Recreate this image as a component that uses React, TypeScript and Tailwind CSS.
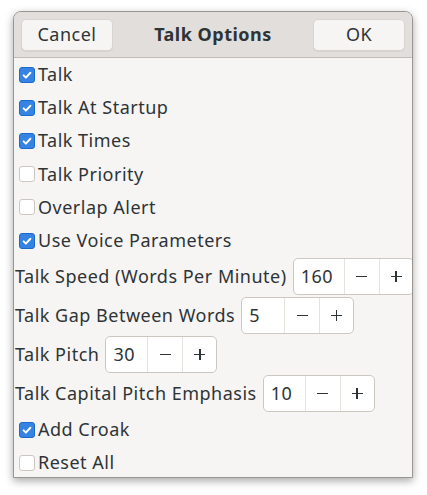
import { useState } from 'react'

const font = { fontFamily: '"Noto Sans", "DejaVu Sans", sans-serif' }

function Check({ checked }: { checked: boolean }) {
  return checked ? (
    <span className="flex h-[16px] w-[16px] shrink-0 items-center justify-center rounded-[3px] border border-[#1b6acb] bg-[#3584e4]">
      <svg viewBox="0 0 16 16" className="h-[12px] w-[12px]" fill="none" stroke="white" strokeWidth={2.6} strokeLinecap="round" strokeLinejoin="round">
        <path d="M3.5 8.5l3 3 6-6.5" />
      </svg>
    </span>
  ) : (
    <span className="h-[16px] w-[16px] shrink-0 rounded-[3px] border border-[#cdc7c2] bg-white" />
  )
}

function CheckRow({ label, initial }: { label: string; initial: boolean }) {
  const [on, setOn] = useState(initial)
  return (
    <div className="flex h-[33.2px] cursor-default items-center gap-[3px] pl-[5px]" onClick={() => setOn(!on)}>
      <Check checked={on} />
      <span className="whitespace-nowrap">{label}</span>
    </div>
  )
}

function SpinRow({ label, value, entry }: { label: string; value: number; entry: string }) {
  const [v, setV] = useState(value)
  return (
    <div className="flex h-[39px] items-center gap-[6px] pl-[1px]">
      <span className="whitespace-nowrap">{label}</span>
      <div className="flex h-[37px] shrink-0 overflow-hidden rounded-[5px] border border-[#cdc7c2] bg-white">
        <div className={`flex items-center pl-[7px] ${entry}`}>{v}</div>
        <button className="flex w-[35px] items-center justify-center border-l border-[#e6e2de]" onClick={() => setV(v - 1)}>
          <span className="block h-[1.5px] w-[11px] bg-[#2e3436]" />
        </button>
        <button className="relative flex w-[34px] items-center justify-center border-l border-[#e6e2de]" onClick={() => setV(v + 1)}>
          <span className="block h-[1.5px] w-[11px] bg-[#2e3436]" />
          <span className="absolute h-[11px] w-[1.5px] bg-[#2e3436]" />
        </button>
      </div>
    </div>
  )
}

export default function App() {
  return (
    <div className="h-[495px] w-[427px] bg-white pl-[13px] pt-[11px] text-[18px] tracking-[0.5px] text-[#2e3436]" style={font}>
      <div className="h-[467px] w-[400px] overflow-hidden rounded-t-[8px] border border-[#9a9590] bg-[#f6f5f4] shadow-[0_3px_9px_rgba(0,0,0,0.35)]">
        <div className="flex h-[46px] items-center justify-between border-b border-[#c0bbb6] bg-[#e1dedb] px-[7px]">
          <button className="h-[32px] w-[92px] rounded-[5px] border border-[#d8d4d0] bg-[#f6f5f4] shadow-[0_1px_0_rgba(0,0,0,0.05)]">Cancel</button>
          <span className="font-bold">Talk Options</span>
          <button className="h-[32px] w-[92px] rounded-[5px] border border-[#d8d4d0] bg-[#f6f5f4] shadow-[0_1px_0_rgba(0,0,0,0.05)]">OK</button>
        </div>
        <div className="flex flex-col">
          <CheckRow label="Talk" initial={true} />
          <CheckRow label="Talk At Startup" initial={true} />
          <CheckRow label="Talk Times" initial={true} />
          <CheckRow label="Talk Priority" initial={false} />
          <CheckRow label="Overlap Alert" initial={false} />
          <CheckRow label="Use Voice Parameters" initial={true} />
          <SpinRow label="Talk Speed (Words Per Minute)" value={160} entry="w-[50px]" />
          <SpinRow label="Talk Gap Between Words" value={5} entry="w-[42px]" />
          <SpinRow label="Talk Pitch" value={30} entry="w-[41px]" />
          <SpinRow label="Talk Capital Pitch Emphasis" value={10} entry="w-[41px]" />
          <CheckRow label="Add Croak" initial={true} />
          <CheckRow label="Reset All" initial={false} />
        </div>
      </div>
    </div>
  )
}
